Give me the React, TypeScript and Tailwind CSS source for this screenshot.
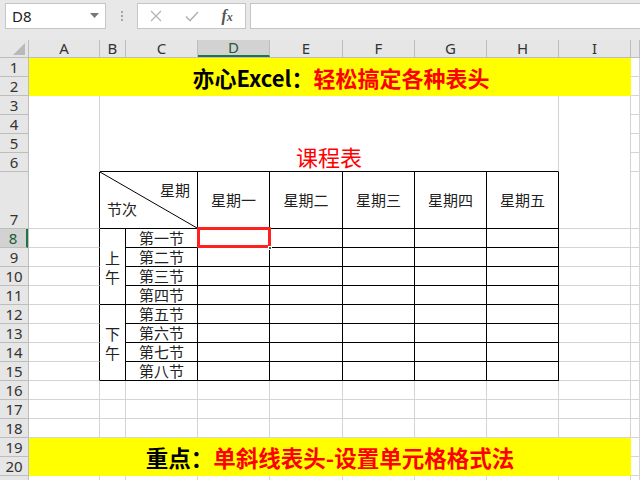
import React from 'react';

const CJK = "font-['Noto_Sans_CJK_SC','Noto_Sans',sans-serif]";
const UI = "font-['Noto_Sans','Liberation_Sans',sans-serif]";

const G = 'border-r border-b border-r-[#d4d4d4] border-b-[#d4d4d4]';
const K = 'border-r border-b border-r-black border-b-black';
const AK = 'border-r border-b border-r-black border-b-[#d4d4d4]';

const columns = [
  { label: 'A', w: 'w-[71px]' },
  { label: 'B', w: 'w-[26px]' },
  { label: 'C', w: 'w-[72px]' },
  { label: 'D', w: 'w-[72px]', active: true },
  { label: 'E', w: 'w-[73px]' },
  { label: 'F', w: 'w-[72px]' },
  { label: 'G', w: 'w-[72px]' },
  { label: 'H', w: 'w-[72px]' },
  { label: 'I', w: 'w-[72px]' },
  { label: '', w: 'flex-1' },
];

const rowNumbers = Array.from({ length: 21 }, (_, i) => i + 1);
const lessons = ['第一节', '第二节', '第三节', '第四节', '第五节', '第六节', '第七节', '第八节'];
const days = ['星期一', '星期二', '星期三', '星期四', '星期五'];

const FormulaBar: React.FC = () => (
  <div className="h-[40px] shrink-0 bg-[#e8e8e8] flex items-start pt-[3px] pl-[5px]">
    <div className="w-[101px] h-[26px] bg-white border border-[#c6c6c6] flex items-center justify-between pl-[6px] pr-[6px]">
      <span className={`${UI} text-[15px] text-[#222]`}>D8</span>
      <svg width="9" height="6" viewBox="0 0 9 6">
        <path d="M0 0 L9 0 L4.5 5 Z" fill="#777" />
      </svg>
    </div>
    <div className="w-[31px] h-[26px] flex flex-col items-center justify-center gap-[2px]">
      <span className="w-[2px] h-[2px] bg-[#a6a6a6]" />
      <span className="w-[2px] h-[2px] bg-[#a6a6a6]" />
      <span className="w-[2px] h-[2px] bg-[#a6a6a6]" />
    </div>
    <div className="w-[109px] h-[26px] bg-white border border-[#c6c6c6] flex items-center">
      <span className="w-[36px] flex justify-center">
        <svg width="12" height="12" viewBox="0 0 12 12">
          <path d="M1 1 L11 11 M11 1 L1 11" stroke="#b4b4b4" strokeWidth="1.3" />
        </svg>
      </span>
      <span className="w-[36px] flex justify-center">
        <svg width="14" height="11" viewBox="0 0 14 11">
          <path d="M1 5.5 L5 9.5 L13 1" stroke="#b4b4b4" strokeWidth="1.6" fill="none" />
        </svg>
      </span>
      <span className="w-[36px] text-center font-['Liberation_Serif',serif] italic font-bold text-[#555] leading-none">
        <span className="text-[16px]">f</span>
        <span className="text-[12px]">x</span>
      </span>
    </div>
    <div className="ml-[4px] flex-1 h-[26px] bg-white border border-[#c6c6c6] border-r-0" />
  </div>
);

const ColumnHeader: React.FC = () => (
  <div className="h-[18px] shrink-0 flex bg-[#e6e6e6] border-b border-[#bdbdbd]">
    <div className="w-[29px] relative border-r border-[#bdbdbd]">
      <svg className="absolute right-[3px] bottom-[2px]" width="12" height="12" viewBox="0 0 12 12">
        <path d="M12 0 L12 12 L0 12 Z" fill="#b9b9b9" />
      </svg>
    </div>
    {columns.map((c) => (
      <div
        key={c.label + c.w}
        className={`${c.w} ${UI} text-[15px] leading-[17px] flex items-center justify-center border-r border-[#bdbdbd] ${
          c.active ? 'bg-[#d2d2d2] text-[#215a38] border-b-2 border-b-[#217346]' : 'text-[#333]'
        }`}
      >
        {c.label}
      </div>
    ))}
  </div>
);

const RowHeader: React.FC = () => (
  <div className="w-[29px] shrink-0 bg-[#e6e6e6] border-r border-[#bdbdbd] flex flex-col">
    {rowNumbers.map((n) => (
      <div
        key={n}
        className={`${n === 7 ? 'h-[57px] items-end' : 'h-[19px] items-center'} shrink-0 flex justify-center border-b border-[#bdbdbd] ${UI} text-[15px] leading-[18px] ${
          n === 8 ? 'bg-[#d2d2d2] text-[#215a38] border-r-2 border-r-[#217346]' : 'text-[#333]'
        }`}
      >
        {n < 21 ? n : ''}
      </div>
    ))}
  </div>
);

const DiagonalCell: React.FC = () => (
  <div className={`${K} col-span-2 relative ${CJK} text-[15px] leading-[18px] text-[#222]`}>
    <svg className="absolute inset-0" width="98" height="56" viewBox="0 0 98 56" preserveAspectRatio="none">
      <line x1="0" y1="0" x2="97" y2="56" stroke="#000" strokeWidth="1" />
    </svg>
    <span className="absolute right-[7px] top-[9px]">星期</span>
    <span className="absolute left-[7px] bottom-[10px]">节次</span>
  </div>
);

const Selected: React.FC = () => (
  <>
    <div className="absolute -top-[2px] -left-[1px] -right-[2px] -bottom-[1px] border-[3px] border-[#ff2020] rounded-[1px] z-10" />
    <div className="absolute -right-[3px] -bottom-[3px] w-[4px] h-[4px] bg-[#217346] border border-white z-20" />
  </>
);

const TableRow: React.FC<{ index: number }> = ({ index }) => (
  <>
    <div className={AK} />
    {index === 0 && (
      <div className={`${K} row-span-4 flex flex-col items-center justify-center ${CJK} text-[15px] leading-[19px] text-[#222]`}>
        <span>上</span>
        <span>午</span>
      </div>
    )}
    {index === 4 && (
      <div className={`${K} row-span-4 flex flex-col items-center justify-center ${CJK} text-[15px] leading-[19px] text-[#222]`}>
        <span>下</span>
        <span>午</span>
      </div>
    )}
    <div className={`${K} flex items-center justify-center ${CJK} text-[15px] leading-[18px] text-[#222]`}>
      {lessons[index]}
    </div>
    {days.map((d, i) => (
      <div key={d} className={`${K} relative`}>
        {index === 0 && i === 0 && <Selected />}
      </div>
    ))}
    <div className={G} />
    <div className={G} />
  </>
);

const GridRow: React.FC = () => (
  <>
    {Array.from({ length: 10 }, (_, i) => (
      <div key={i} className={G} />
    ))}
  </>
);

export default function App() {
  return (
    <div className="w-[640px] h-[480px] overflow-hidden bg-white flex flex-col">
      <FormulaBar />
      <ColumnHeader />
      <div className="flex flex-1 min-h-0 overflow-hidden">
        <RowHeader />
        <div className="flex-1 grid grid-cols-[71px_26px_72px_72px_73px_72px_72px_72px_72px_1fr] grid-rows-[repeat(6,19px)_57px_repeat(14,19px)]">
          {/* rows 1-2 */}
          <div className={`col-span-9 row-span-2 bg-[#ffff00] flex items-center justify-center pl-[22px] ${CJK} font-bold text-[22px] leading-none`}>
            <span className="text-black">亦心Excel：</span>
            <span className="text-[#ff0000]">轻松搞定各种表头</span>
          </div>
          <div className={G} />
          <div className={G} />

          {/* rows 3-6 */}
          <div className="row-span-4 border-r border-r-[#d4d4d4]" />
          <div className="col-span-7 row-span-4 border-r border-b border-r-[#d4d4d4] border-b-black flex items-end justify-center pb-[3px]">
            <span className={`${CJK} text-[22px] leading-[24px] text-[#ff0000]`}>课程表</span>
          </div>
          <div className="row-span-4 border-r border-r-[#d4d4d4]" />
          <div className={G} />
          <div className={G} />
          <div className={G} />
          <div className={G} />

          {/* row 7 */}
          <div className={AK} />
          <DiagonalCell />
          {days.map((d) => (
            <div key={d} className={`${K} flex items-center justify-center ${CJK} text-[15px] leading-[18px] text-[#222]`}>
              {d}
            </div>
          ))}
          <div className={G} />
          <div className={G} />

          {/* rows 8-15 */}
          {lessons.map((l, i) => (
            <TableRow key={l} index={i} />
          ))}

          {/* rows 16-18 */}
          <GridRow />
          <GridRow />
          <GridRow />

          {/* rows 19-20 */}
          <div className={`col-span-9 row-span-2 bg-[#ffff00] flex items-center justify-center ${CJK} font-bold text-[22.5px] leading-none`}>
            <span className="text-black">重点：</span>
            <span className="text-[#ff0000]">单斜线表头-设置单元格格式法</span>
          </div>
          <div className={G} />
          <div className={G} />

          {/* row 21 */}
          <GridRow />
        </div>
      </div>
    </div>
  );
}
